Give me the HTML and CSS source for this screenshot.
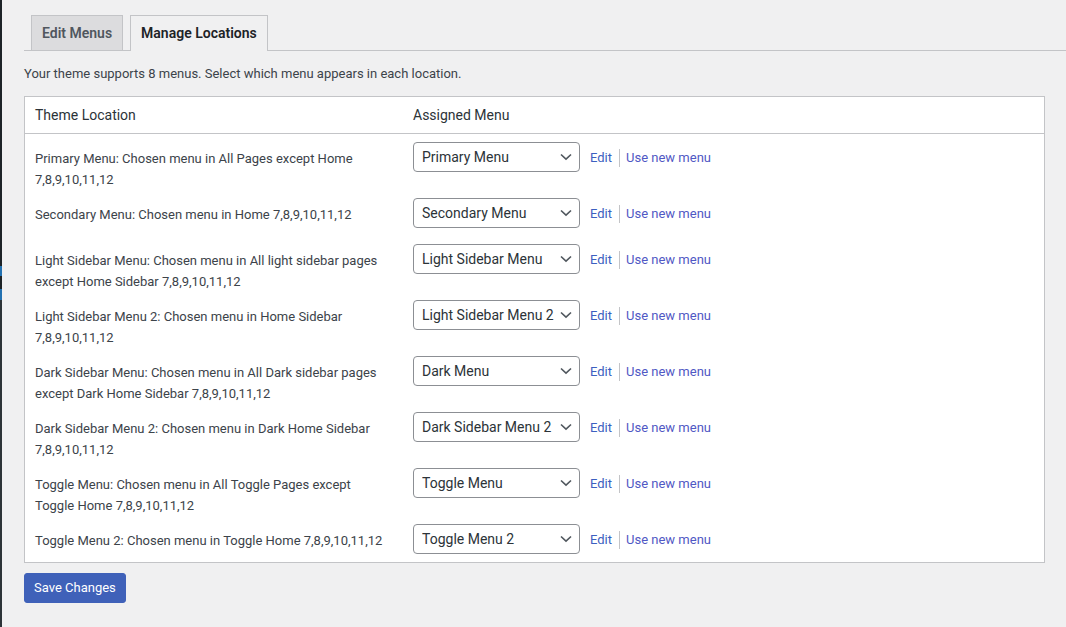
FILE: index.html
```html
<!DOCTYPE html>
<html lang="en">
<head>
<meta charset="utf-8">
<title>Menus ‹ Manage Locations</title>
<link rel="stylesheet" href="styles.css">
</head>
<body>
<div class="layout">
  <aside class="adminbar-edge">
    <div class="edge-top"></div>
    <div class="edge-blue"></div>
    <div class="edge-gap"></div>
    <div class="edge-blue edge-blue-2"></div>
    <div class="edge-bottom"></div>
  </aside>
  <main class="wrap">
    <nav class="nav-tab-wrapper">
      <a class="nav-tab" href="#">Edit Menus</a>
      <a class="nav-tab nav-tab-active" href="#">Manage Locations</a>
    </nav>
    <p class="intro">Your theme supports 8 menus. Select which menu appears in each location.</p>
    <form class="locations-form">
      <table class="menu-locations">
        <thead>
          <tr>
            <th class="col-location">Theme Location</th>
            <th class="col-menu">Assigned Menu</th>
          </tr>
        </thead>
        <tbody>
          <tr>
            <td class="loc-title">Primary Menu: Chosen menu in All Pages except Home 7,8,9,10,11,12</td>
            <td class="loc-menus">
              <div class="row-controls">
                <span class="select-wrap"><select class="menu-select"><option>Primary Menu</option></select><svg class="chev" width="12" height="8" viewBox="0 0 12 8"><path d="M1 1.5 L6 6.2 L11 1.5" fill="none" stroke="#50575e" stroke-width="1.6"/></svg></span>
                <span class="row-links"><a class="edit-link" href="#">Edit</a><a class="new-link" href="#">Use new menu</a></span>
              </div>
            </td>
          </tr>
          <tr>
            <td class="loc-title">Secondary Menu: Chosen menu in Home 7,8,9,10,11,12</td>
            <td class="loc-menus">
              <div class="row-controls">
                <span class="select-wrap"><select class="menu-select"><option>Secondary Menu</option></select><svg class="chev" width="12" height="8" viewBox="0 0 12 8"><path d="M1 1.5 L6 6.2 L11 1.5" fill="none" stroke="#50575e" stroke-width="1.6"/></svg></span>
                <span class="row-links"><a class="edit-link" href="#">Edit</a><a class="new-link" href="#">Use new menu</a></span>
              </div>
            </td>
          </tr>
          <tr>
            <td class="loc-title">Light Sidebar Menu: Chosen menu in All light sidebar pages except Home Sidebar 7,8,9,10,11,12</td>
            <td class="loc-menus">
              <div class="row-controls">
                <span class="select-wrap"><select class="menu-select"><option>Light Sidebar Menu</option></select><svg class="chev" width="12" height="8" viewBox="0 0 12 8"><path d="M1 1.5 L6 6.2 L11 1.5" fill="none" stroke="#50575e" stroke-width="1.6"/></svg></span>
                <span class="row-links"><a class="edit-link" href="#">Edit</a><a class="new-link" href="#">Use new menu</a></span>
              </div>
            </td>
          </tr>
          <tr>
            <td class="loc-title">Light Sidebar Menu 2: Chosen menu in Home Sidebar 7,8,9,10,11,12</td>
            <td class="loc-menus">
              <div class="row-controls">
                <span class="select-wrap"><select class="menu-select"><option>Light Sidebar Menu 2</option></select><svg class="chev" width="12" height="8" viewBox="0 0 12 8"><path d="M1 1.5 L6 6.2 L11 1.5" fill="none" stroke="#50575e" stroke-width="1.6"/></svg></span>
                <span class="row-links"><a class="edit-link" href="#">Edit</a><a class="new-link" href="#">Use new menu</a></span>
              </div>
            </td>
          </tr>
          <tr>
            <td class="loc-title">Dark Sidebar Menu: Chosen menu in All Dark sidebar pages except Dark Home Sidebar 7,8,9,10,11,12</td>
            <td class="loc-menus">
              <div class="row-controls">
                <span class="select-wrap"><select class="menu-select"><option>Dark Menu</option></select><svg class="chev" width="12" height="8" viewBox="0 0 12 8"><path d="M1 1.5 L6 6.2 L11 1.5" fill="none" stroke="#50575e" stroke-width="1.6"/></svg></span>
                <span class="row-links"><a class="edit-link" href="#">Edit</a><a class="new-link" href="#">Use new menu</a></span>
              </div>
            </td>
          </tr>
          <tr>
            <td class="loc-title">Dark Sidebar Menu 2: Chosen menu in Dark Home Sidebar 7,8,9,10,11,12</td>
            <td class="loc-menus">
              <div class="row-controls">
                <span class="select-wrap"><select class="menu-select"><option>Dark Sidebar Menu 2</option></select><svg class="chev" width="12" height="8" viewBox="0 0 12 8"><path d="M1 1.5 L6 6.2 L11 1.5" fill="none" stroke="#50575e" stroke-width="1.6"/></svg></span>
                <span class="row-links"><a class="edit-link" href="#">Edit</a><a class="new-link" href="#">Use new menu</a></span>
              </div>
            </td>
          </tr>
          <tr>
            <td class="loc-title">Toggle Menu: Chosen menu in All Toggle Pages except Toggle Home 7,8,9,10,11,12</td>
            <td class="loc-menus">
              <div class="row-controls">
                <span class="select-wrap"><select class="menu-select"><option>Toggle Menu</option></select><svg class="chev" width="12" height="8" viewBox="0 0 12 8"><path d="M1 1.5 L6 6.2 L11 1.5" fill="none" stroke="#50575e" stroke-width="1.6"/></svg></span>
                <span class="row-links"><a class="edit-link" href="#">Edit</a><a class="new-link" href="#">Use new menu</a></span>
              </div>
            </td>
          </tr>
          <tr>
            <td class="loc-title">Toggle Menu 2: Chosen menu in Toggle Home 7,8,9,10,11,12</td>
            <td class="loc-menus">
              <div class="row-controls">
                <span class="select-wrap"><select class="menu-select"><option>Toggle Menu 2</option></select><svg class="chev" width="12" height="8" viewBox="0 0 12 8"><path d="M1 1.5 L6 6.2 L11 1.5" fill="none" stroke="#50575e" stroke-width="1.6"/></svg></span>
                <span class="row-links"><a class="edit-link" href="#">Edit</a><a class="new-link" href="#">Use new menu</a></span>
              </div>
            </td>
          </tr>
        </tbody>
      </table>
      <div class="submit-row">
        <button type="button" class="button-primary">Save Changes</button>
      </div>
    </form>
  </main>
</div>
</body>
</html>
```
FILE: styles.css
```css
* { box-sizing: border-box; }

html, body {
  margin: 0;
  padding: 0;
  height: 100%;
}

body {
  background: #f0f0f1;
  color: #3c434a;
  font-family: Roboto, "Liberation Sans", Arial, sans-serif;
  font-size: 13px;
  line-height: 1.4;
  overflow: hidden;
}

.layout {
  display: flex;
  min-height: 627px;
}

/* thin visible edge of the admin sidebar */
.adminbar-edge {
  width: 2px;
  flex: 0 0 2px;
  display: flex;
  flex-direction: column;
  background: #1d2327;
}
.edge-top { height: 266px; background: #1d2327; }
.edge-blue { height: 10px; background: #2271b1; }
.edge-gap { height: 13px; background: #1d2327; }
.edge-blue-2 { height: 11px; }
.edge-bottom { flex: 1; background: #2c3338; }

.wrap {
  flex: 1;
  padding: 15px 21px 0 22px;
  min-width: 0;
}

/* tabs */
.nav-tab-wrapper {
  display: flex;
  border-bottom: 1px solid #c3c4c7;
  margin-right: -21px;
  padding-left: 7px;
  gap: 7px;
}
.nav-tab {
  display: block;
  padding: 5px 10px;
  border: 1px solid #c3c4c7;
  border-bottom: none;
  background: #dcdcde;
  color: #50575e;
  font-size: 14px;
  font-weight: 600;
  line-height: 24px;
  text-decoration: none;
}
.nav-tab-active {
  background: #f0f0f1;
  color: #1d2327;
  margin-bottom: -1px;
  padding-bottom: 6px;
}

.intro {
  margin: 13px 0 12px;
  line-height: 20px;
  color: #3c434a;
}

/* table */
.menu-locations {
  width: 1021px;
  border: 1px solid #c3c4c7;
  border-spacing: 0;
  border-collapse: separate;
  background: #fff;
  table-layout: fixed;
}
.menu-locations thead th {
  text-align: left;
  font-weight: 400;
  font-size: 14px;
  color: #2c3338;
  padding: 8px 10px;
  line-height: 20px;
  border-bottom: 1px solid #c3c4c7;
}
.col-location { width: 378px; }
.col-menu { padding-left: 9px; }

.loc-title {
  vertical-align: top;
  padding: 14px 16px 0 10px;
  line-height: 21px;
  color: #3c434a;
}
.loc-menus {
  vertical-align: top;
  padding: 8px 10px;
}

.row-controls {
  display: flex;
  align-items: center;
}

.select-wrap {
  position: relative;
  display: inline-block;
  width: 167px;
  height: 30px;
}
.menu-select {
  appearance: none;
  -webkit-appearance: none;
  width: 167px;
  height: 30px;
  border: 1px solid #8c8f94;
  border-radius: 4px;
  background: #fff;
  color: #2c3338;
  font-family: Roboto, "Liberation Sans", Arial, sans-serif;
  font-size: 14px;
  padding: 0 24px 0 8px;
  margin: 0;
  line-height: 28px;
}
.chev {
  position: absolute;
  right: 8px;
  top: 11px;
  pointer-events: none;
}

.row-links {
  display: flex;
  align-items: center;
  margin-left: 7px;
  line-height: 20px;
  padding-top: 1px;
}
.row-links a {
  text-decoration: none;
  font-size: 13px;
}
.edit-link {
  color: #3c5fc0;
  padding: 0 7px 0 3px;
}
.new-link {
  color: #5058c4;
  padding-left: 6px;
  border-left: 1px solid #c3c4c7;
  line-height: 18px;
}

.submit-row {
  margin-top: 10px;
}
.button-primary {
  display: inline-block;
  height: 30px;
  padding: 0 9px;
  border: 1px solid #3f61b9;
  border-radius: 3px;
  background: #3f61b9;
  color: #fff;
  font-family: Roboto, "Liberation Sans", Arial, sans-serif;
  font-size: 13px;
  line-height: 28px;
  white-space: nowrap;
  cursor: pointer;
}
```
